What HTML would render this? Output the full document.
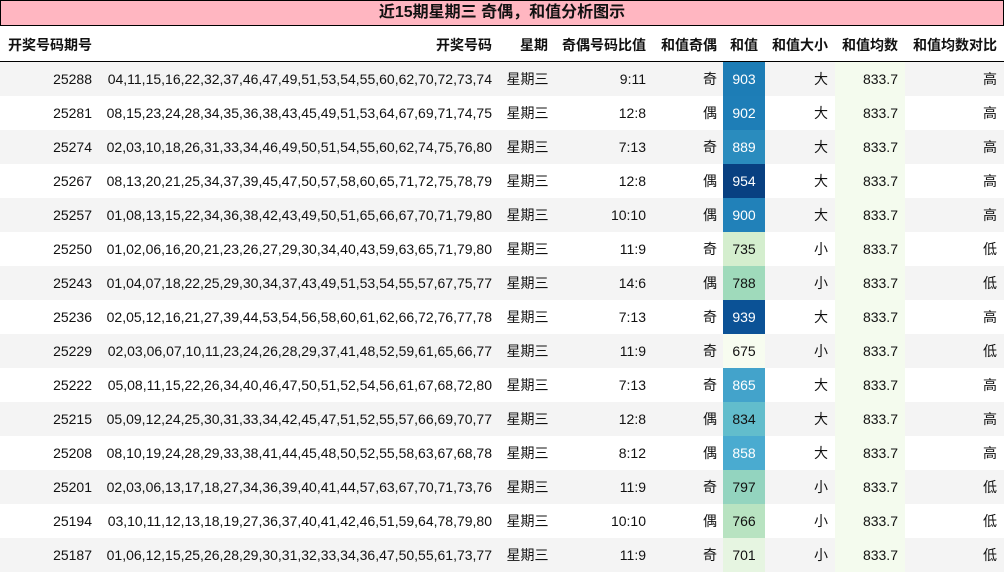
<!DOCTYPE html><html><head><meta charset="utf-8"><style>
body{margin:0;width:1004px;height:573px;background:#fff;font-family:"Liberation Sans","Noto Sans CJK SC",sans-serif;font-size:14px;color:#111;position:relative;overflow:hidden}
.t{position:absolute;left:0;top:0;width:1002px;height:24px;background:#ffb6c1;border:1px solid #000;text-align:center;font-weight:bold;font-size:16px;line-height:24px}
.h{position:absolute;top:26px;left:0;width:1004px;height:35px;border-bottom:1px solid #000;font-weight:bold}
.r{position:absolute;left:0;width:1004px;height:34px}
.c{position:absolute;top:0;height:100%;line-height:34px;white-space:nowrap}
.h .c{line-height:38px}
.rt{text-align:right}.ct{text-align:center}
</style></head><body>
<div class="t">近15期星期三 奇偶，和值分析图示</div>
<div class="h">
<div class="c" style="left:8px">开奖号码期号</div>
<div class="c rt" style="left:300px;width:192px">开奖号码</div>
<div class="c rt" style="left:500px;width:48px">星期</div>
<div class="c rt" style="left:556px;width:90px">奇偶号码比值</div>
<div class="c rt" style="left:650px;width:67px">和值奇偶</div>
<div class="c ct" style="left:723px;width:42px">和值</div>
<div class="c rt" style="left:765px;width:63px">和值大小</div>
<div class="c rt" style="left:835px;width:63px">和值均数</div>
<div class="c rt" style="left:905px;width:92px">和值均数对比</div>
</div>
<div id="rows"></div>
<script>
var d=[
["25288","04,11,15,16,22,32,37,46,47,49,51,53,54,55,60,62,70,72,73,74","9:11","奇","903","#1d7db6","#fff","大","高"],
["25281","08,15,23,24,28,34,35,36,38,43,45,49,51,53,64,67,69,71,74,75","12:8","偶","902","#1e7eb7","#fff","大","高"],
["25274","02,03,10,18,26,31,33,34,46,49,50,51,54,55,60,62,74,75,76,80","7:13","奇","889","#2a8cbe","#fff","大","高"],
["25267","08,13,20,21,25,34,37,39,45,47,50,57,58,60,65,71,72,75,78,79","12:8","偶","954","#084081","#fff","大","高"],
["25257","01,08,13,15,22,34,36,38,42,43,49,50,51,65,66,67,70,71,79,80","10:10","偶","900","#2181b9","#fff","大","高"],
["25250","01,02,06,16,20,21,23,26,27,29,30,34,40,43,59,63,65,71,79,80","11:9","奇","735","#d4eece","#111","小","低"],
["25243","01,04,07,18,22,25,29,30,34,37,43,49,51,53,54,55,57,67,75,77","14:6","偶","788","#9fdabb","#111","小","低"],
["25236","02,05,12,16,21,27,39,44,53,54,56,58,60,61,62,66,72,76,77,78","7:13","奇","939","#0b5296","#fff","大","高"],
["25229","02,03,06,07,10,11,23,24,26,28,29,37,41,48,52,59,61,65,66,77","11:9","奇","675","#f7fcf0","#111","小","低"],
["25222","05,08,11,15,22,26,34,40,46,47,50,51,52,54,56,61,67,68,72,80","7:13","奇","865","#43a3cb","#fff","大","高"],
["25215","05,09,12,24,25,30,31,33,34,42,45,47,51,52,55,57,66,69,70,77","12:8","偶","834","#62bdcc","#111","大","高"],
["25208","08,10,19,24,28,29,33,38,41,44,45,48,50,52,55,58,63,67,68,78","8:12","偶","858","#4aabd0","#fff","大","高"],
["25201","02,03,06,13,17,18,27,34,36,39,40,41,44,57,63,67,70,71,73,76","11:9","奇","797","#93d4bf","#111","小","低"],
["25194","03,10,11,12,13,18,19,27,36,37,40,41,42,46,51,59,64,78,79,80","10:10","偶","766","#b8e3c1","#111","小","低"],
["25187","01,06,12,15,25,26,28,29,30,31,32,33,34,36,47,50,55,61,73,77","11:9","奇","701","#e6f5e1","#111","小","低"]];
var h="";
d.forEach(function(r,i){
var bg=i%2==0?"#f4f4f4":"#fff";
h+='<div class="r" style="top:'+(62+i*34)+'px;background:'+bg+'">'+
'<div class="c rt" style="left:0;width:92px">'+r[0]+'</div>'+
'<div class="c rt" style="left:100px;width:392px">'+r[1]+'</div>'+
'<div class="c ct" style="left:500px;width:55px">星期三</div>'+
'<div class="c rt" style="left:556px;width:90px">'+r[2]+'</div>'+
'<div class="c rt" style="left:650px;width:67px">'+r[3]+'</div>'+
'<div class="c ct" style="left:723px;width:42px;background:'+r[5]+';color:'+r[6]+'">'+r[4]+'</div>'+
'<div class="c rt" style="left:765px;width:63px">'+r[7]+'</div>'+
'<div class="c rt" style="left:835px;width:63px;padding-right:7px;background:#f4fbee">833.7</div>'+
'<div class="c rt" style="left:905px;width:92px">'+r[8]+'</div></div>';});
document.getElementById("rows").innerHTML=h;
</script>
</body></html>
